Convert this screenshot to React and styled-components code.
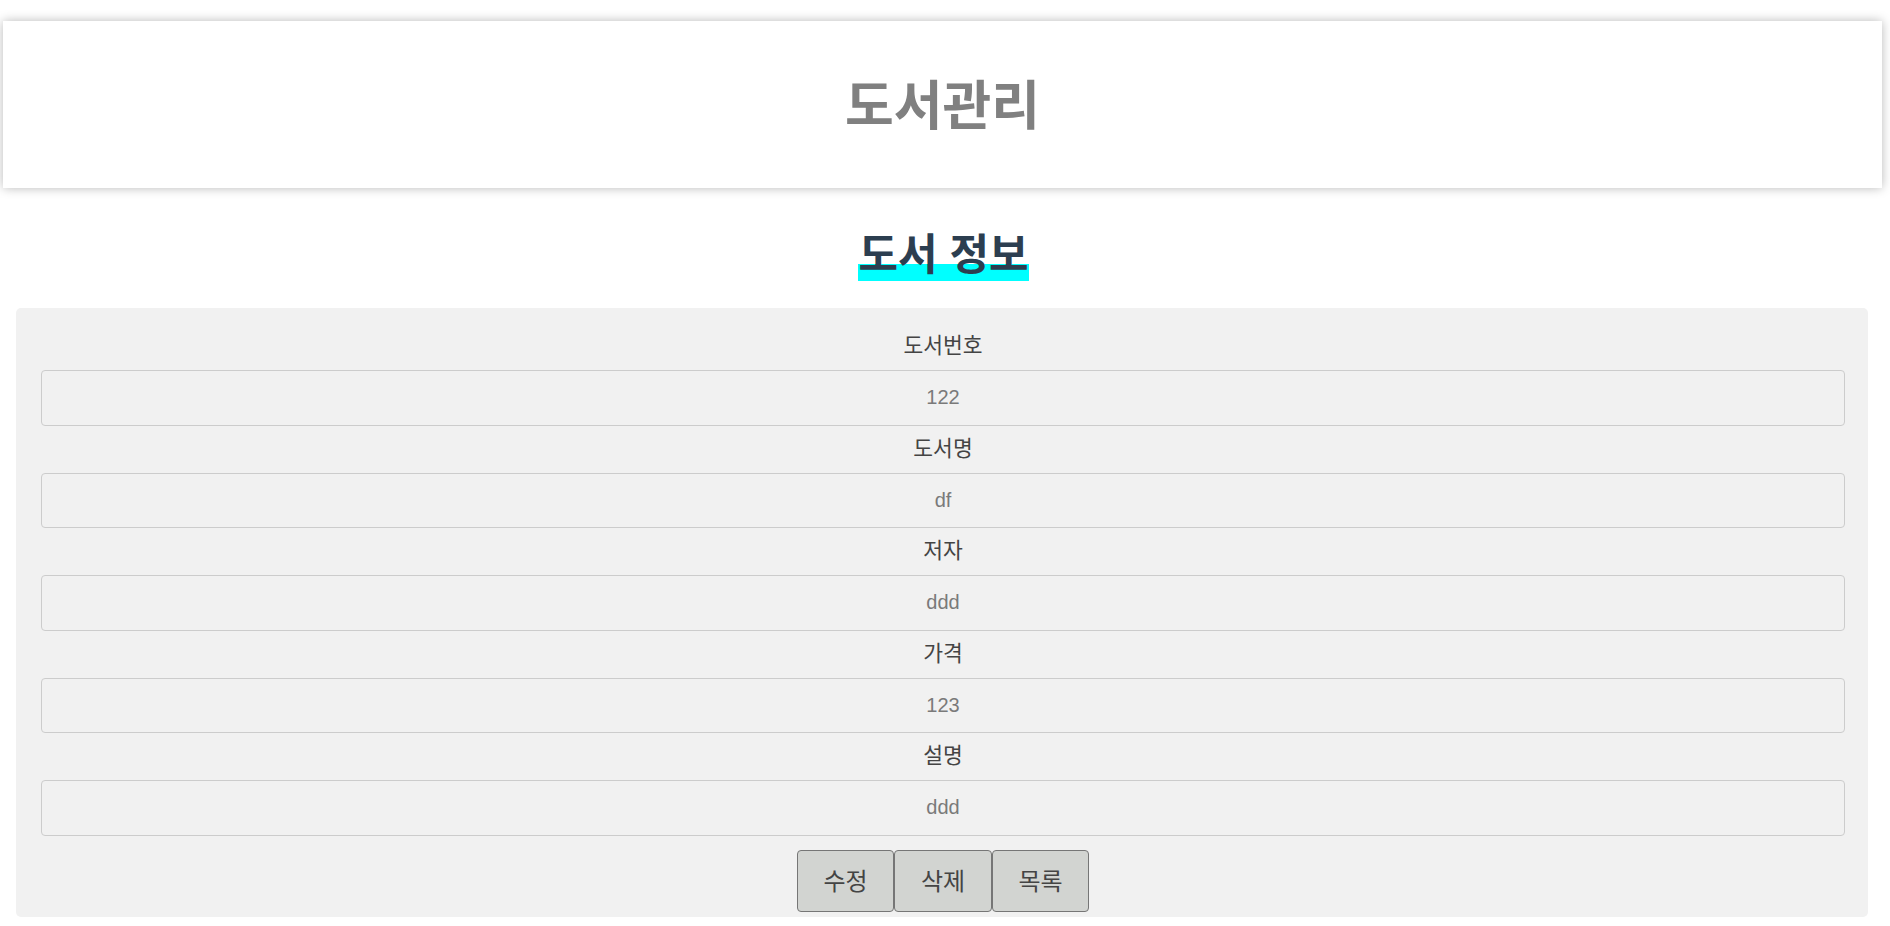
import React from "react";
import styled, { createGlobalStyle } from "styled-components";

const Global = createGlobalStyle`
  html, body { margin: 0; padding: 0; background: #ffffff; }
  body {
    padding: 21px 8px 0 8px;
    font-family: "Liberation Sans", "Noto Sans CJK KR", sans-serif;
  }
  * { box-sizing: border-box; }
`;

const Header = styled.header`
  margin-left: -5px;
  width: 1879px;
  height: 167px;
  background: #ffffff;
  box-shadow: 0 0 10px rgba(0, 0, 0, 0.28);
  display: flex;
  align-items: center;
  justify-content: center;
`;

const AppTitle = styled.h1`
  margin: 4px 0 0 0;
  font-size: 53px;
  font-weight: 700;
  color: #808080;
  line-height: 1.2;
`;

const TitleRow = styled.div`
  display: flex;
  justify-content: center;
  margin-top: 44px;
  margin-bottom: 27px;
`;

const SectionTitle = styled.h2`
  margin: 0 0 0 -3px;
  display: inline-block;
  height: 49px;
  line-height: 46px;
  font-size: 43px;
  font-weight: 700;
  color: #2c3e50;
  background: linear-gradient(to bottom, transparent calc(100% - 17px), #00ffff calc(100% - 17px));
`;

const Panel = styled.section`
  width: 1852px;
  margin-left: 8px;
  background: #f1f1f1;
  border-radius: 5px;
  padding: 15px 23px 5px 25px;
`;

const Label = styled.label`
  display: block;
  height: 47px;
  line-height: 47px;
  text-align: center;
  font-size: 21.5px;
  color: #444444;
`;

const Input = styled.input`
  display: block;
  width: 100%;
  height: 55.5px;
  margin: 0;
  border: 1px solid #cccccc;
  border-radius: 4px;
  background: #f1f1f1;
  text-align: center;
  font-family: "Liberation Sans", "Noto Sans CJK KR", sans-serif;
  font-size: 20px;
  color: #7a7a7a;
  outline: none;
`;

const ButtonRow = styled.div`
  display: flex;
  justify-content: center;
  margin-top: 14.5px;
`;

const Button = styled.button`
  width: 97.5px;
  height: 62px;
  margin: 0;
  padding: 0 0 4px 0;
  border: 1px solid #767676;
  border-radius: 4px;
  background: #d2d4d1;
  font-family: "Liberation Sans", "Noto Sans CJK KR", sans-serif;
  font-size: 24px;
  color: #444444;
  cursor: pointer;
`;

const fields = [
  { label: "도서번호", value: "122" },
  { label: "도서명", value: "df" },
  { label: "저자", value: "ddd" },
  { label: "가격", value: "123" },
  { label: "설명", value: "ddd" },
];

export default function App() {
  return (
    <>
      <Global />
      <Header>
        <AppTitle>도서관리</AppTitle>
      </Header>
      <TitleRow>
        <SectionTitle>도서 정보</SectionTitle>
      </TitleRow>
      <Panel>
        {fields.map((f) => (
          <div key={f.label}>
            <Label>{f.label}</Label>
            <Input readOnly value={f.value} />
          </div>
        ))}
        <ButtonRow>
          <Button>수정</Button>
          <Button>삭제</Button>
          <Button>목록</Button>
        </ButtonRow>
      </Panel>
    </>
  );
}
